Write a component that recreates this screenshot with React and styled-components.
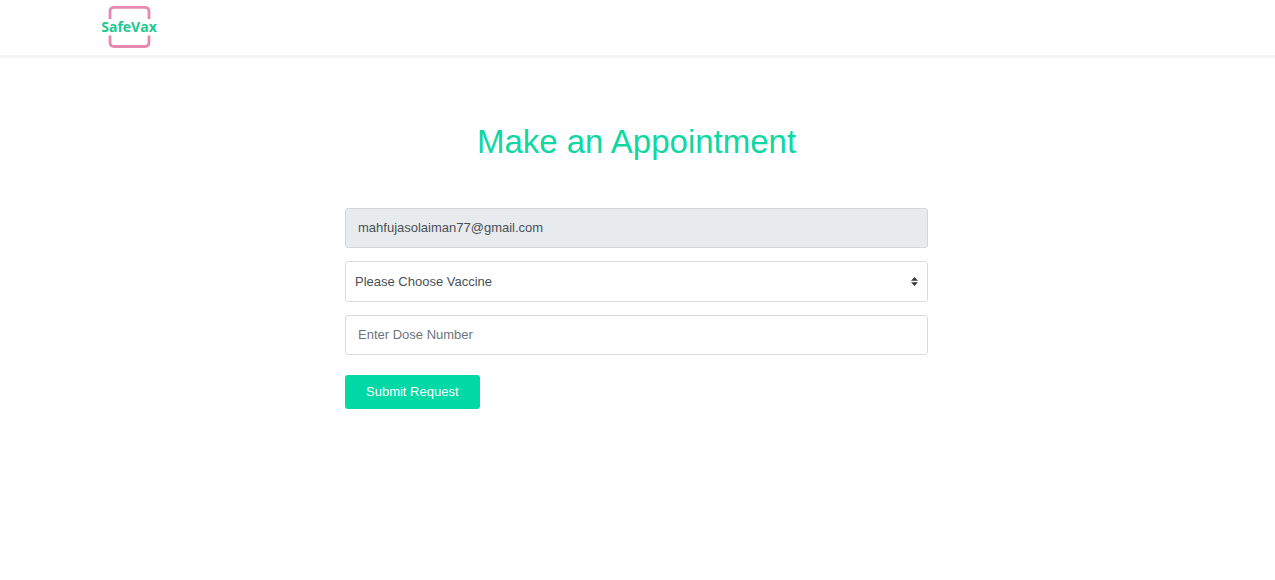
import React from 'react';
import styled, { createGlobalStyle } from 'styled-components';

const GlobalStyle = createGlobalStyle`
  *, *::before, *::after { box-sizing: border-box; }
  body {
    margin: 0;
    background: #fff;
    color: #495057;
    font-family: "Liberation Sans", Arial, sans-serif;
    font-size: 13px;
    line-height: 20px;
  }
`;

const Header = styled.header`
  padding: 5px 8% 6px;
  display: flex;
  align-items: center;
  background: #fff;
  border-bottom: 3px solid #f4f4f4;
`;

const Brand = styled.a`
  display: block;
  line-height: 0;
`;

const Main = styled.main`
  padding: 64px 17px 40px 15px;
`;

const Title = styled.h1`
  margin: 0 0 46px;
  color: #0fd7a3;
  font-size: 33px;
  font-weight: 400;
  line-height: 40px;
  text-align: center;
`;

const Form = styled.form`
  max-width: 583px;
  margin: 0 auto;
  display: flex;
  flex-direction: column;
  gap: 13px;
`;

const SelectBox = styled.div`
  position: relative;
`;

const Input = styled.input`
  display: block;
  width: 100%;
  height: 40px;
  padding: 0 12px 2px;
  border: 1px solid #d9dcdf;
  border-radius: 3px;
  background: #fff;
  color: #495057;
  font: inherit;

  &::placeholder { color: #6c757d; opacity: 1; }
  &:read-only { background: #e8ebee; border-color: #d3d7da; }
`;

const Select = styled.select`
  display: block;
  width: 100%;
  height: 41px;
  padding: 0 28px 0 9px;
  border: 1px solid #d9dcdf;
  border-radius: 3px;
  background: #fff;
  color: #495057;
  font: inherit;
  appearance: none;
`;

const Arrows = styled.svg`
  position: absolute;
  top: 16px;
  right: 10px;
  pointer-events: none;
`;

const Submit = styled.button`
  align-self: flex-start;
  margin-top: 7px;
  height: 34px;
  padding: 0 21px;
  border: 0;
  border-radius: 3px;
  background: #00d9a5;
  color: #fff;
  font: inherit;
  cursor: pointer;
`;

function Logo() {
  return (
    <svg width="55" height="44" viewBox="0 0 55 44" role="img" aria-label="SafeVax">
      <g fill="none" stroke="#e788b0" strokeWidth="2.8">
        <path d="M8 14V6.5Q8 2.3 12.2 2.3H42.8Q47 2.3 47 6.5V14" />
        <path d="M8 30.5V37.3Q8 41.5 12.2 41.5H42.8Q47 41.5 47 37.3V30.5" />
      </g>
      <text
        x="27"
        y="27"
        textAnchor="middle"
        fill="#22c98f"
        fontFamily="'Open Sans', 'Noto Sans', sans-serif"
        fontSize="14"
        fontWeight="700"
      >
        SafeVax
      </text>
    </svg>
  );
}

export default function App() {
  return (
    <>
      <GlobalStyle />
      <Header>
        <Brand href="#"><Logo /></Brand>
      </Header>
      <Main>
        <Title>Make an Appointment</Title>
        <Form onSubmit={(e) => e.preventDefault()}>
          <Input type="email" aria-label="Email" value="mahfujasolaiman77@gmail.com" readOnly />
          <SelectBox>
            <Select aria-label="Vaccine" defaultValue="">
              <option value="">Please Choose Vaccine</option>
            </Select>
            <Arrows width="7" height="9" viewBox="0 0 7 9" fill="#343a40" aria-hidden="true">
              <path d="M3.5 0L7 3.8H0ZM3.5 9L0 5.2H7Z" />
            </Arrows>
          </SelectBox>
          <Input type="text" aria-label="Dose number" placeholder="Enter Dose Number" />
          <Submit type="submit">Submit Request</Submit>
        </Form>
      </Main>
    </>
  );
}
